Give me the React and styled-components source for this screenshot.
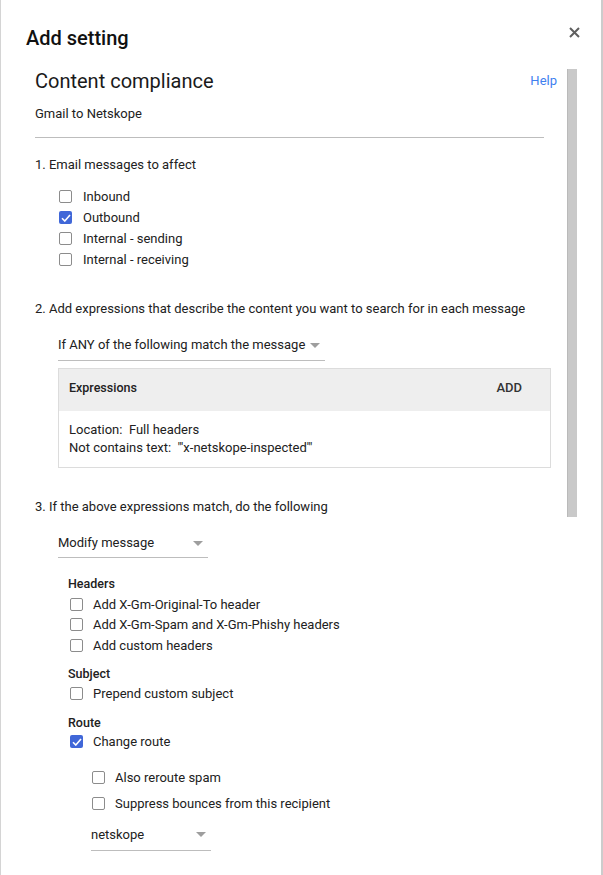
import React from "react";
import styled, { createGlobalStyle } from "styled-components";

const Global = createGlobalStyle`
  html, body { margin: 0; padding: 0; background: #fff; }
  body { font-family: Roboto, "Noto Sans", Arial, sans-serif; color: #212121; }
  * { box-sizing: border-box; }
`;

const Dialog = styled.div`
  width: 603px;
  height: 875px;
  overflow: hidden;
  background: #fff;
  border-left: 1px solid #d4d4d4;
  border-right: 2px solid #cccccc;
`;

const Header = styled.div`
  display: flex;
  align-items: flex-start;
  justify-content: space-between;
  padding: 24px 20px 0 25px;
  margin-bottom: 16px;
`;

const Title = styled.h1`
  margin: 0;
  font-size: 20px;
  line-height: 28px;
  font-weight: 500;
  color: #111;
`;

const Close = styled.button`
  border: 0;
  background: none;
  padding: 0;
  margin-top: 3px;
  width: 12px;
  height: 12px;
  display: flex;
  cursor: pointer;
`;

const Body = styled.div`
  position: relative;
  padding: 0 45px 0 34px;
`;

const Thumb = styled.div`
  position: absolute;
  top: 1px;
  left: 566px;
  width: 10px;
  height: 448px;
  background: #c9c9c9;
  border-left: 1px solid #bababa;
`;

const TitleRow = styled.div`
  display: flex;
  align-items: center;
  justify-content: space-between;
`;

const SubTitle = styled.h2`
  margin: 0;
  font-size: 20px;
  line-height: 26px;
  font-weight: 400;
  color: #1a1a1a;
`;

const HelpLink = styled.a`
  font-size: 13px;
  color: #3f7fef;
  text-decoration: none;
  margin-top: -2px;
  margin-right: -1px;
`;

const Text = styled.div`
  font-size: 13px;
  line-height: 20px;
  margin-top: ${(p) => p.$mt || 0}px;
  margin-left: ${(p) => p.$ml || 0}px;
`;

const Rule = styled.hr`
  border: 0;
  border-top: 1px solid #bdbdbd;
  margin: 13px 12px 0 0;
`;

const CheckList = styled.div`
  display: flex;
  flex-direction: column;
  margin-top: ${(p) => p.$mt || 0}px;
  margin-left: ${(p) => p.$ml || 0}px;
`;

const CheckRow = styled.label`
  display: flex;
  align-items: center;
  gap: ${(p) => p.$gap || 10}px;
  height: ${(p) => p.$h || 21}px;
  font-size: 13px;
  color: #212121;
`;

const Box = styled.span`
  width: 13px;
  height: 13px;
  border-radius: 2px;
  flex: none;
  display: flex;
  align-items: center;
  justify-content: center;
  border: ${(p) => (p.$on ? "none" : "1.5px solid #8c8c8c")};
  background: ${(p) => (p.$on ? "#4067d8" : "#fff")};
`;

const Select = styled.div`
  display: flex;
  align-items: center;
  justify-content: space-between;
  width: ${(p) => p.$w}px;
  margin-top: ${(p) => p.$mt || 0}px;
  margin-left: ${(p) => p.$ml || 0}px;
  padding: 0 5px ${(p) => p.$pb || 5}px 0;
  border-bottom: 1px solid #bdbdbd;
  font-size: 13px;
  line-height: 20px;
  color: #212121;
`;

const Caret = styled.span`
  width: 0;
  height: 0;
  border-left: 5px solid transparent;
  border-right: 5px solid transparent;
  border-top: 5px solid #9e9e9e;
`;

const ExprBox = styled.div`
  margin: 7px 0 0 23px;
  width: 493px;
  border: 1px solid #dcdcdc;
`;

const ExprHead = styled.div`
  display: flex;
  justify-content: space-between;
  align-items: center;
  background: #eeeeee;
  padding: 9px 28px 13px 10px;
  font-size: 12.5px;
  line-height: 20px;
  font-weight: 500;
  color: #212121;
`;

const AddBtn = styled.span`
  font-size: 13px;
  font-weight: 500;
  color: #333;
`;

const ExprBody = styled.div`
  padding: 10px 10px 10px 10px;
  font-size: 13px;
  line-height: 18px;
  color: #212121;
`;

const Group = styled.div`
  margin-left: 33px;
  margin-top: ${(p) => p.$mt || 0}px;
`;

const GroupLabel = styled.div`
  font-size: 12.5px;
  font-weight: 500;
  line-height: 20px;
  color: #212121;
  margin-top: ${(p) => p.$mt || 0}px;
`;

const Sub = styled.div`
  margin-left: 23px;
  margin-top: 14px;
`;

function Check({ on, children, h, gap }) {
  return (
    <CheckRow $h={h} $gap={gap}>
      <Box $on={on}>
        {on && (
          <svg width="10" height="8" viewBox="0 0 10 8">
            <path d="M1 4.2 L3.8 7 L9 1" stroke="#fff" strokeWidth="1.6" fill="none" />
          </svg>
        )}
      </Box>
      {children}
    </CheckRow>
  );
}

export default function App() {
  return (
    <>
      <Global />
      <Dialog>
        <Header>
          <Title>Add setting</Title>
          <Close aria-label="Close">
            <svg width="11" height="11" viewBox="0 0 11 11">
              <path d="M1 1 L10 10 M10 1 L1 10" stroke="#5f5f5f" strokeWidth="2" />
            </svg>
          </Close>
        </Header>
        <Body>
          <Thumb />
          <TitleRow>
            <SubTitle>Content compliance</SubTitle>
            <HelpLink href="#">Help</HelpLink>
          </TitleRow>
          <Text $mt={10}>Gmail to Netskope</Text>
          <Rule />
          <Text $mt={17}>1. Email messages to affect</Text>
          <CheckList $mt={11} $ml={24}>
            <Check gap={11}>Inbound</Check>
            <Check gap={11} on>Outbound</Check>
            <Check gap={11}>Internal - sending</Check>
            <Check gap={11}>Internal - receiving</Check>
          </CheckList>
          <Text $mt={29}>2. Add expressions that describe the content you want to search for in each message</Text>
          <Select $w={267} $mt={16} $ml={23}>
            <span>If ANY of the following match the message</span>
            <Caret />
          </Select>
          <ExprBox>
            <ExprHead>
              <span>Expressions</span>
              <AddBtn>ADD</AddBtn>
            </ExprHead>
            <ExprBody>
              <div>Location:&nbsp; Full headers</div>
              <div>Not contains text:&nbsp; "'x-netskope-inspected'"</div>
            </ExprBody>
          </ExprBox>
          <Text $mt={29}>3. If the above expressions match, do the following</Text>
          <Select $w={150} $mt={16} $ml={23} $pb={4}>
            <span>Modify message</span>
            <Caret />
          </Select>
          <Group $mt={16}>
            <GroupLabel>Headers</GroupLabel>
            <CheckList $ml={2}>
              <Check h={20.5}>Add X-Gm-Original-To header</Check>
              <Check h={20.5}>Add X-Gm-Spam and X-Gm-Phishy headers</Check>
              <Check h={20.5}>Add custom headers</Check>
            </CheckList>
            <GroupLabel $mt={8}>Subject</GroupLabel>
            <CheckList $ml={2}>
              <Check h={20}>Prepend custom subject</Check>
            </CheckList>
            <GroupLabel $mt={9}>Route</GroupLabel>
            <CheckList $ml={2}>
              <Check on h={18}>Change route</Check>
            </CheckList>
            <Sub>
              <CheckList $ml={1}>
                <Check h={26}>Also reroute spam</Check>
                <Check h={26}>Suppress bounces from this recipient</Check>
              </CheckList>
              <Select $w={120} $mt={8}>
                <span>netskope</span>
                <Caret />
              </Select>
            </Sub>
          </Group>
        </Body>
      </Dialog>
    </>
  );
}
